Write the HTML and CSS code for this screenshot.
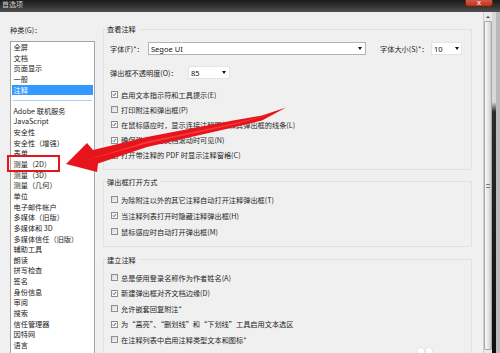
FILE: index.html
```html
<!DOCTYPE html>
<html lang="zh-CN">
<head>
    <meta charset="UTF-8">
    <meta name="viewport" content="width=device-width, initial-scale=1.0">
    <title>首选项</title>
    <link rel="stylesheet" href="styles.css">
</head>
<body>
    <div class="window">
        <div class="titlebar">
            <span class="title">首选项</span>
            <span class="close">X</span>
        </div>

        <div class="main">
            <div class="sidebar">
                <div class="sidebar-label">种类(G)：</div>
                <ul class="category-list">
                    <li>全屏</li>
                    <li>文档</li>
                    <li>页面显示</li>
                    <li>一般</li>
                    <li class="selected">注释</li>
                    <li class="divider"></li>
                    <li>Adobe 联机服务</li>
                    <li>JavaScript</li>
                    <li>安全性</li>
                    <li>安全性（增强）</li>
                    <li>表单</li>
                    <li>测量（2D）</li>
                    <li>测量（3D）</li>
                    <li>测量（几何）</li>
                    <li>单位</li>
                    <li>电子邮件帐户</li>
                    <li>多媒体（旧版）</li>
                    <li>多媒体和 3D</li>
                    <li>多媒体信任（旧版）</li>
                    <li>辅助工具</li>
                    <li>朗读</li>
                    <li>拼写检查</li>
                    <li>签名</li>
                    <li>身份信息</li>
                    <li>审阅</li>
                    <li>搜索</li>
                    <li>信任管理器</li>
                    <li>因特网</li>
                    <li>语言</li>
                </ul>
            </div>

            <div class="pane">
                <fieldset class="group group-view">
                    <legend>查看注释</legend>
                    <div class="field-row font-row">
                        <label class="font-label">字体(F)*：</label>
                        <div class="select select-font">Segoe UI<span class="caret"></span></div>
                        <label class="size-label">字体大小(S)*：</label>
                        <div class="select select-size">10<span class="caret"></span></div>
                    </div>
                    <div class="field-row opacity-row">
                        <label class="opacity-label">弹出框不透明度(O)：</label>
                        <div class="select select-opacity">85<span class="caret"></span></div>
                    </div>
                    <div class="checks">
                        <div class="check"><span class="box checked"><svg viewBox="0 0 7 7"><path d="M1.3 3.4 L2.8 5.1 L5.6 1.4"/></svg></span>启用文本指示符和工具提示(E)</div>
                        <div class="check"><span class="box"></span>打印附注和弹出框(P)</div>
                        <div class="check"><span class="box checked"><svg viewBox="0 0 7 7"><path d="M1.3 3.4 L2.8 5.1 L5.6 1.4"/></svg></span>在鼠标感应时，显示连接注释图标和其弹出框的线条(L)</div>
                        <div class="check"><span class="box checked"><svg viewBox="0 0 7 7"><path d="M1.3 3.4 L2.8 5.1 L5.6 1.4"/></svg></span>确保弹出框在文档滚动时可见(N)</div>
                        <div class="check"><span class="box"></span>打开带注释的 PDF 时显示注释窗格(C)</div>
                    </div>
                </fieldset>

                <fieldset class="group group-popup">
                    <legend>弹出框打开方式</legend>
                    <div class="checks">
                        <div class="check"><span class="box"></span>为除附注以外的其它注释自动打开注释弹出框(T)</div>
                        <div class="check"><span class="box checked"><svg viewBox="0 0 7 7"><path d="M1.3 3.4 L2.8 5.1 L5.6 1.4"/></svg></span>当注释列表打开时隐藏注释弹出框(H)</div>
                        <div class="check"><span class="box"></span>鼠标感应时自动打开弹出框(M)</div>
                    </div>
                </fieldset>

                <fieldset class="group group-create">
                    <legend>建立注释</legend>
                    <div class="checks">
                        <div class="check"><span class="box"></span>总是使用登录名称作为作者姓名(A)</div>
                        <div class="check"><span class="box checked"><svg viewBox="0 0 7 7"><path d="M1.3 3.4 L2.8 5.1 L5.6 1.4"/></svg></span>新建弹出框对齐文档边缘(D)</div>
                        <div class="check"><span class="box"></span>允许嵌套回复附注*</div>
                        <div class="check"><span class="box checked"><svg viewBox="0 0 7 7"><path d="M1.3 3.4 L2.8 5.1 L5.6 1.4"/></svg></span>为“高亮”、“删划线”和“下划线”工具启用文本选区</div>
                        <div class="check"><span class="box"></span>在注释列表中启用注释类型文本和图标*</div>
                    </div>
                </fieldset>
            </div>

            <div class="scrollbar">
                <div class="scroll-up"></div>
                <div class="scroll-thumb"><span class="grip"></span></div>
            </div>
            <div class="frame-edge"></div>
        </div>
    </div>

    <!-- red markup drawn over the screenshot -->
    <svg class="annotation" width="500" height="353" viewBox="0 0 500 353">
        <rect x="8" y="156" width="51" height="15" fill="none" stroke="#e3161d" stroke-width="2"/>
        <polygon fill="#e8141c" points="66,164 87,143 93,150 147,137 233,120.5 262,115.5 286,107.5 262,120.5 233,127.5 147,147 98,163.5 97,172"/>
        <polygon fill="#f75a5a" opacity="0.55" points="80,162 147,141.5 233,123.5 270,114.5 233,125 147,143.5"/>
        <ellipse cx="421" cy="352" rx="3.5" ry="4.5" fill="#fff" stroke="#d6d6d6" stroke-width="0.6"/>
        <ellipse cx="429" cy="352" rx="3.5" ry="4.5" fill="#fff" stroke="#d6d6d6" stroke-width="0.6"/>
    </svg>
</body>
</html>
```

FILE: styles.css
```css
* {
    box-sizing: border-box;
}
html, body {
    margin: 0;
}
body {
    position: relative;
    width: 500px;
    height: 353px;
    overflow: hidden;
    font-family: "Noto Sans CJK SC", "Noto Sans", sans-serif;
    font-size: 7.2px;
    color: #1e1e1e;
    background: #f0f0f0;
}
.window {
    display: flex;
    flex-direction: column;
    height: 353px;
    overflow: hidden;
}
.titlebar {
    flex: none;
    height: 12px;
    display: flex;
    align-items: flex-start;
    background: linear-gradient(to bottom, #1b1b1b, #343434 55%, #525252);
}
.title {
    padding-left: 2px;
    line-height: 8px;
    font-size: 7px;
    color: #cfcfcf;
}
.close {
    margin-left: auto;
    margin-right: 7px;
    width: 28px;
    height: 7px;
    line-height: 7px;
    text-align: center;
    font-family: "Liberation Sans", sans-serif;
    font-size: 6px;
    font-weight: bold;
    color: #f4e4e0;
    background: linear-gradient(to bottom, #d65a45, #b8321f);
    border: 1px solid #6e2015;
    border-top: none;
    border-radius: 0 0 3px 3px;
}
.main {
    flex: 1;
    min-height: 0;
    display: flex;
    overflow: hidden;
}

/* category list */
.sidebar {
    flex: none;
    width: 95px;
    display: flex;
    flex-direction: column;
    padding: 13px 0 0 10px;
}
.sidebar-label {
    line-height: 10px;
}
.category-list {
    flex: 1;
    list-style: none;
    margin: 6px 0 0;
    padding: 0 1px;
    overflow: hidden;
    background: #fff;
    border: 1px solid #a3a3a3;
    border-bottom: none;
}
.category-list li {
    height: 10.65px;
    line-height: 10.65px;
    padding-left: 1.5px;
    white-space: nowrap;
    color: #222;
}
.category-list .selected {
    background: #3399ff;
    color: #fff;
}
.category-list .divider {
    display: flex;
    align-items: center;
    padding: 0 1px;
}
.category-list .divider::before {
    content: "";
    flex: 1;
    height: 1px;
    background: #a9d3f5;
}

/* settings pane */
.pane {
    flex: 1;
    min-width: 0;
    padding: 12px 11px 0 8px;
    overflow: hidden;
}
.group {
    margin: 0;
    min-width: 0;
    padding: 0 0 6px 7px;
    border: 1px solid #e2e2e2;
}
.group legend {
    margin-left: -4px;
    padding: 0 3px 0 0;
    line-height: 10px;
    color: #222;
}
.group-popup {
    margin-top: 7px;
}
.group-create {
    margin-top: 8px;
}
.field-row {
    display: flex;
    align-items: center;
    height: 13px;
}
.font-row {
    margin-top: 8px;
}
.opacity-row {
    margin-top: 11px;
}
.font-label {
    width: 38px;
    margin-left: -1px;
}
.size-label {
    width: 51px;
    margin-left: 14px;
}
.opacity-label {
    width: 78px;
    margin-left: -1px;
}
.select {
    height: 13px;
    display: flex;
    align-items: center;
    padding: 0 3px 0 2px;
    background: #fff;
    border: 1px solid #e4e4e4;
    font-family: "Noto Sans", sans-serif;
    font-size: 7.5px;
    color: #111;
}
.select-font {
    width: 218px;
    border-color: #b3b3b3;
}
.select-size {
    width: 31px;
    padding-right: 2px;
}
.select-opacity {
    width: 42px;
}
.caret {
    margin-left: auto;
    border-left: 2.5px solid transparent;
    border-right: 2.5px solid transparent;
    border-top: 3px solid #111;
}
.checks {
    margin-top: 5px;
}
.group-view .checks {
    margin-top: 8px;
}
.check {
    display: flex;
    align-items: center;
    height: 15.5px;
    white-space: nowrap;
}
.group-view .check {
    height: 15.2px;
}
.group-popup .check {
    height: 16px;
}
.box {
    flex: none;
    display: flex;
    width: 7px;
    height: 7px;
    margin-right: 3px;
    border: 1px solid #8e8e8e;
    background: linear-gradient(135deg, #d8d8d8, #f6f6f6);
}
.box.checked {
    background: #f8f8f8;
}
.box svg {
    width: 100%;
    height: 100%;
    overflow: visible;
}
.box path {
    fill: none;
    stroke: #1f3c86;
    stroke-width: 1.1;
}

/* scrollbar and window frame */
.scrollbar {
    flex: none;
    width: 9px;
    display: flex;
    flex-direction: column;
    padding-top: 1px;
    background: #e9e9e9;
    border-left: 1px solid #cdcdcd;
}
.scroll-up {
    flex: none;
    height: 8px;
    display: flex;
    align-items: center;
    justify-content: center;
}
.scroll-up::before {
    content: "";
    border-left: 2px solid transparent;
    border-right: 2px solid transparent;
    border-bottom: 2px solid #444;
}
.scroll-thumb {
    flex: 1;
    margin-bottom: 3px;
    display: flex;
    align-items: center;
    justify-content: center;
    border: 1px solid #a9a9a9;
    border-radius: 1px;
    background: linear-gradient(to right, #f8f8f8, #e2e2e2 60%, #cbcbcb);
}
.grip {
    width: 4px;
    height: 4px;
    background: repeating-linear-gradient(to bottom, #7d7d7d 0 0.7px, transparent 0.7px 1.5px);
}
.frame-edge {
    flex: none;
    width: 8px;
    background:
        linear-gradient(to right, transparent 0 4px, #bababa 4px),
        linear-gradient(to bottom, #d8d8d8 0, #d8d8d8 90px, #2b2b2b 100px, #0e0e0e);
}

.annotation {
    position: absolute;
    top: 0;
    left: 0;
    pointer-events: none;
}
```
